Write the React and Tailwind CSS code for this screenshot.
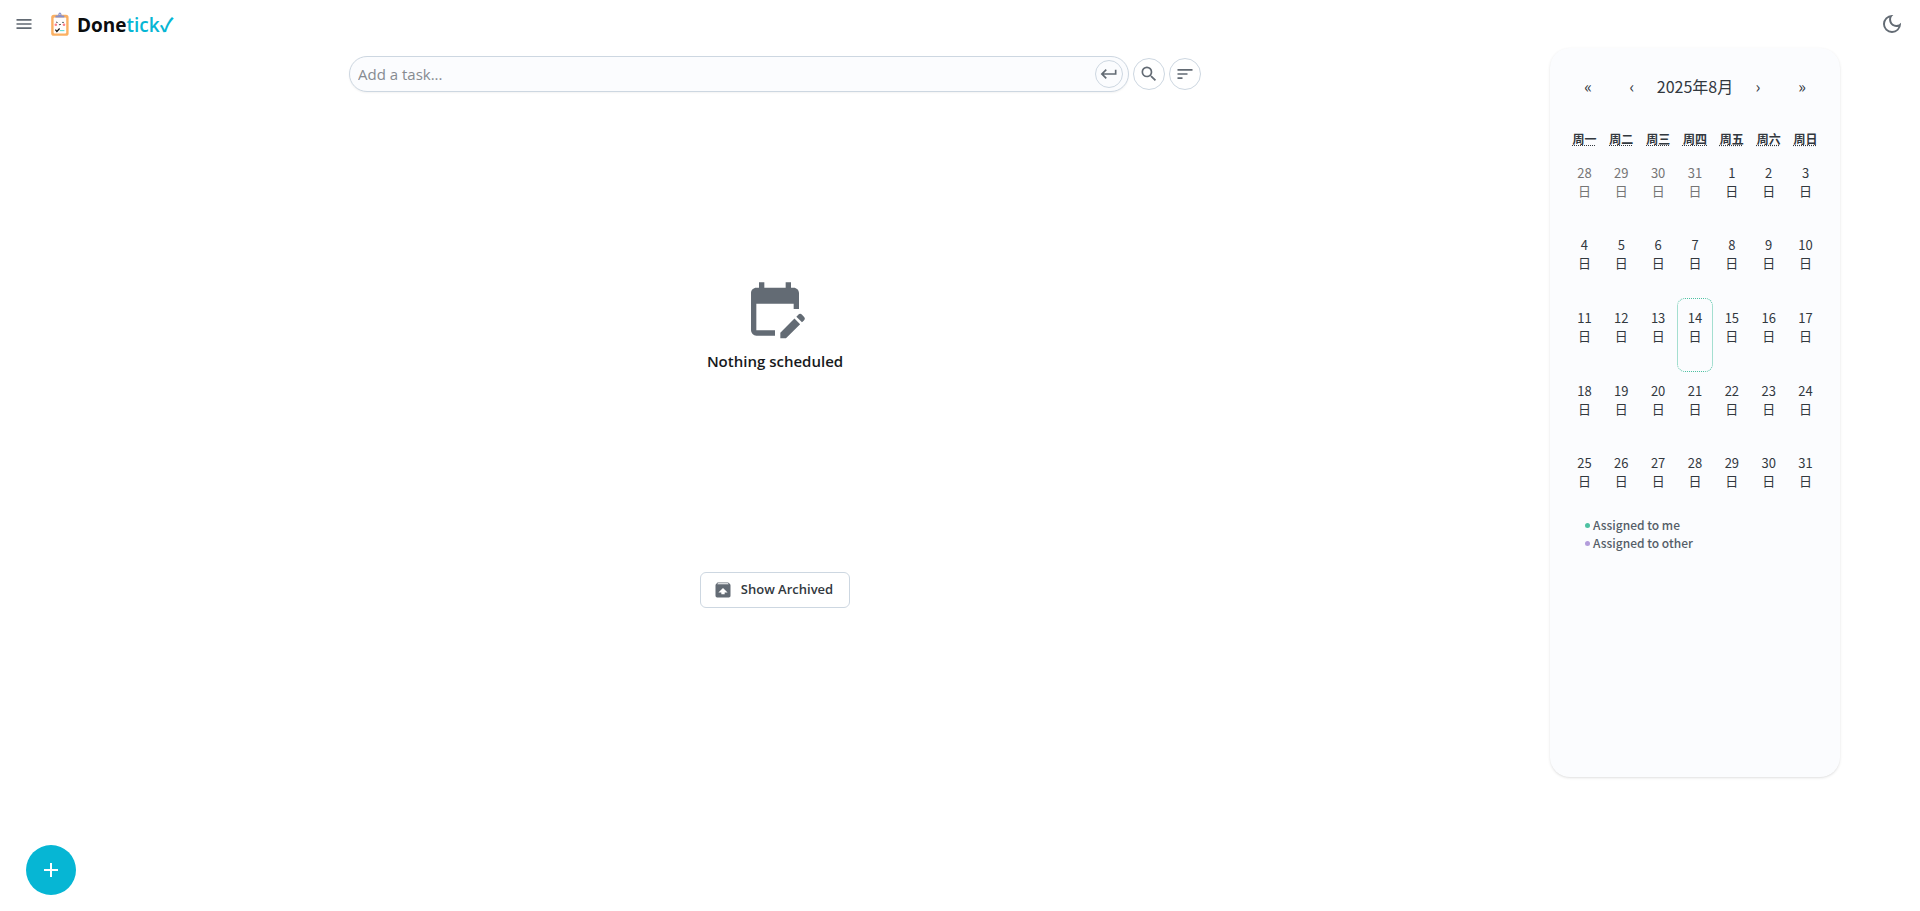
import {
  MdAdd,
  MdEditCalendar,
  MdKeyboardReturn,
  MdMenu,
  MdOutlineDarkMode,
  MdSearch,
  MdSort,
  MdUnarchive,
} from 'react-icons/md';

const weekdays = ['周一', '周二', '周三', '周四', '周五', '周六', '周日'];

const days = [
  ...[28, 29, 30, 31].map((day) => ({ day, month: 7 })),
  ...Array.from({ length: 31 }, (_, i) => ({ day: i + 1, month: 8 })),
];

function Logo() {
  return (
    <svg viewBox="0 0 20 24" className="h-6 w-5" aria-hidden="true">
      <rect x="1.2" y="2.8" width="17.4" height="21" rx="2.6" fill="#fbb062" />
      <rect x="3.6" y="5.4" width="12.6" height="16" rx="1" fill="#fffdfc" />
      <path d="M5.4 5.6V4.4q0-.8.8-.8h2q.2-3.2 1.7-3.2t1.7 3.2h2q.8 0 .8.800v1.200z" fill="#8791cc" />
      <circle cx="9.9" cy="2.3" r="0.6" fill="#e8eaf8" />
      <circle cx="5.8" cy="12.8" r="1.300" fill="#fb7f8a" />
      <circle cx="14" cy="12.8" r="1.300" fill="#fb7f8a" />
      <path d="M6 10.600q.8-1 1.600 0M12.200 10.600q.8-1 1.600 0M8.900 12.200q1 1.300 2 0" fill="none" stroke="#333" strokeWidth="0.900" />
      <path d="M5.400 17.600l1.500 1.900 2.700-3" fill="none" stroke="#111" strokeWidth="1.200" />
      <path d="M9.800 18.600h4.600" stroke="#5fdcd3" strokeWidth="1.100" />
    </svg>
  );
}

function Header() {
  return (
    <header className="flex h-12 items-center justify-between px-4">
      <div className="flex items-center">
        <button type="button" aria-label="Menu" className="text-[#636b74]">
          <MdMenu size={20} className="-ml-0.5" />
        </button>
        <a href="#" className="ml-4 flex items-center gap-[7px] text-[19px] leading-7 font-bold text-[#0b0d0e]">
          <Logo />
          <span className="pt-0.5">
            Done<span className="font-semibold text-[#06b6d4]">tick✓</span>
          </span>
        </a>
      </div>
      <button type="button" aria-label="Dark mode" className="text-[#636b74]">
        <MdOutlineDarkMode size={24} />
      </button>
    </header>
  );
}

function RoundButton({ label, small, children }) {
  return (
    <button
      type="button"
      aria-label={label}
      className={`flex shrink-0 items-center justify-center rounded-full border border-[#cdd7e1] text-[#636b74] ${
        small ? 'size-7' : 'size-8'
      }`}
    >
      {children}
    </button>
  );
}

function Calendar() {
  return (
    <aside className="mr-20 h-[80vh] w-[290px] shrink-0 rounded-[20px] bg-[#fbfcfe] p-4 font-['Noto_Sans_CJK_SC','Noto_Sans',sans-serif] text-[#32383e] shadow-sm">
      <div className="flex h-11 items-center text-base">
        <button type="button" aria-label="Previous year" className="h-11 w-11">«</button>
        <button type="button" aria-label="Previous month" className="h-11 w-11">‹</button>
        <button type="button" className="grow">2025年8月</button>
        <button type="button" aria-label="Next month" className="h-11 w-11">›</button>
        <button type="button" aria-label="Next year" className="h-11 w-11">»</button>
      </div>
      <div className="mt-4 grid grid-cols-7 text-center text-xs font-bold">
        {weekdays.map((name) => (
          <div key={name} className="py-1.5 leading-[18px]">
            <abbr className="underline decoration-dotted">{name}</abbr>
          </div>
        ))}
      </div>
      <div className="grid grid-cols-7 items-center text-[13px]">
        {days.map(({ day, month }) => {
          const today = month === 8 && day === 14;
          return (
            <button
              key={`${month}-${day}`}
              type="button"
              className={`flex flex-col items-center rounded-lg pt-2.5 leading-[18px] ${
                today ? 'h-[74px] border border-dotted border-[#4ec1a2]' : 'h-[72px]'
              } ${month === 7 ? 'text-[#757575]' : ''}`}
            >
              <span>{day}</span>
              <span>日</span>
            </button>
          );
        })}
      </div>
      <ul className="px-[19px] text-xs font-medium leading-[18px] text-[#555e68]">
        <li className="flex items-center gap-[3px]">
          <span className="size-[5px] rounded-full bg-[#4ec1a2]" />
          Assigned to me
        </li>
        <li className="flex items-center gap-[3px]">
          <span className="size-[5px] rounded-full bg-[#b39ddb]" />
          Assigned to other
        </li>
      </ul>
    </aside>
  );
}

export default function App() {
  return (
    <div className="flex min-h-screen flex-col bg-white font-['Open_Sans','Noto_Sans_CJK_SC',sans-serif]">
      <Header />
      <div className="flex grow items-start">
        <main className="flex grow flex-col items-center px-6 pt-2">
          <div className="flex w-full max-w-[852px] items-center gap-1">
            <div className="flex h-9 grow items-center rounded-full border border-[#cdd7e1] bg-[#fbfcfe] pl-2 pr-[5px] shadow-xs">
              <input
                type="text"
                aria-label="Add a task"
                placeholder="Add a task..."
                className="min-w-0 grow bg-transparent text-[15px] leading-6 outline-none placeholder:text-[#868b91]"
              />
              <RoundButton label="Submit" small>
                <MdKeyboardReturn size={20} />
              </RoundButton>
            </div>
            <RoundButton label="Search">
              <MdSearch size={20} />
            </RoundButton>
            <RoundButton label="Sort">
              <MdSort size={20} />
            </RoundButton>
          </div>
          <section className="flex h-[50vh] flex-col items-center justify-center pt-2.5 text-[#636b74]">
            <MdEditCalendar size={64} />
            <h2 className="mt-2 text-[15px] leading-6 font-semibold text-[#171a1c]">Nothing scheduled</h2>
          </section>
          <button
            type="button"
            className="mt-6 flex h-9 items-center gap-2 rounded-md border border-[#cdd7e1] pr-4 pl-3 text-[13px] font-semibold text-[#32383e]"
          >
            <MdUnarchive size={20} className="text-[#636b74]" />
            Show Archived
          </button>
        </main>
        <Calendar />
      </div>
      <button
        type="button"
        aria-label="Add task"
        className="fixed bottom-4 left-[26px] flex size-[50px] items-center justify-center rounded-full bg-[#06b6d4] text-white"
      >
        <MdAdd size={24} />
      </button>
    </div>
  );
}
